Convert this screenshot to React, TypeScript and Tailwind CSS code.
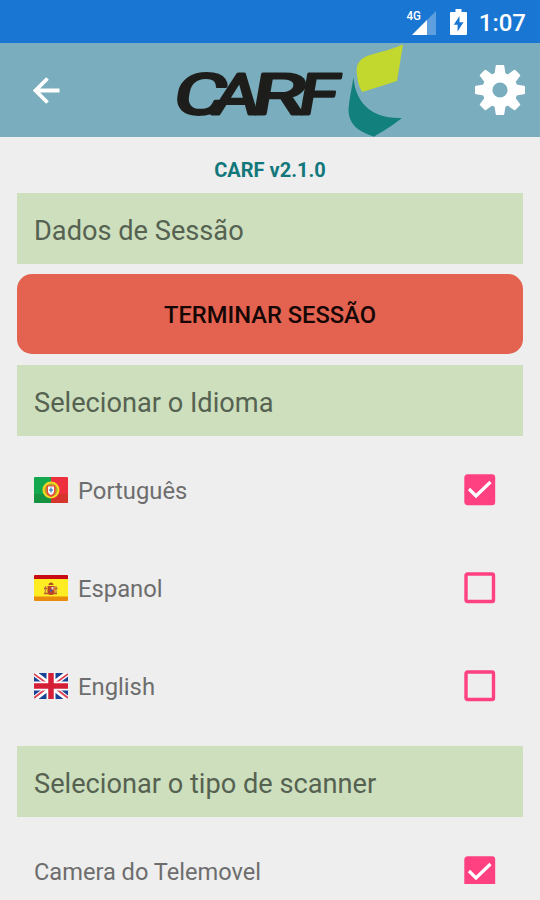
import React, { useState } from 'react';

type Language = 'pt' | 'es' | 'en';

const SignalIcon = () => (
	<svg className="w-[30px] h-7" viewBox="0 0 30 28">
		<path d="M30 3v24H6z" fill="#fff" fillOpacity="0.3" />
		<path d="M21 12v15H6z" fill="#fff" />
		<text x="0.500" y="12" fill="#fff" fontFamily="Roboto, sans-serif" fontWeight="500" fontSize="13" textLength="14.500" lengthAdjust="spacingAndGlyphs">
			4G
		</text>
	</svg>
);

const BatteryIcon = () => (
	<svg className="w-[17px] h-[26px]" viewBox="0 0 17 26">
		<path d="M5.5 0h6v3H16a1 1 0 0 1 1 1v21a1 1 0 0 1-1 1H1a1 1 0 0 1-1-1V4a1 1 0 0 1 1-1h4.5z" fill="#fff" />
		<path d="M9.500 7L3.800 15.800h3.800V22.500l5.900-9.300H9.500z" fill="#1976d2" />
	</svg>
);

const BackIcon = () => (
	<svg className="w-[27px] h-[27px]" viewBox="0 0 27 27" fill="none" stroke="#fff" strokeWidth="3.8">
		<path d="M26.500 13.500H3M14.500 1.500l-12 12 12 12" />
	</svg>
);

const GearIcon = () => (
	<svg className="w-[50px] h-[50px]" viewBox="-25 -25 50 50">
		<circle r="12.600" fill="none" stroke="#fff" strokeWidth="10" />
		{[0, 45, 90, 135, 180, 225, 270, 315].map((angle) => (
			<path
				key={angle}
				d="M-5.500-16L-4.300-24Q-4.200-25-3.300-25H3.300Q4.200-25 4.300-24L5.500-16z"
				fill="#fff"
				transform={`rotate(${angle})`}
			/>
		))}
	</svg>
);

const Logo = () => (
	<svg className="w-[250px] h-[94px]" viewBox="160 43 250 94">
		<g
			fill="#1d1d1b"
			stroke="#1d1d1b"
			strokeWidth="2.800"
			strokeLinejoin="round"
			fontFamily="Roboto, sans-serif"
			fontWeight="400"
			fontSize="56.500"
			transform="translate(0 113.500) skewX(-10)"
		>
			<text x="171.500" y="0" textLength="53" lengthAdjust="spacingAndGlyphs">C</text>
			<text x="211" y="0" textLength="46" lengthAdjust="spacingAndGlyphs">A</text>
			<text x="249" y="0" textLength="54" lengthAdjust="spacingAndGlyphs">R</text>
			<text x="296" y="0" textLength="40" lengthAdjust="spacingAndGlyphs">F</text>
		</g>
		<path d="M403 44.500L397 81L362.500 92C359 88 357 79 356.700 71C356.500 62 362 57.500 370 55C382 51.500 393 49 403 44.500z" fill="#c3d82e" />
		<path d="M353.500 77C355 101 370 119 402 118C392 126 383 131 374 136.700C357 131 349 124 348.500 110C349 99 352 88 353.500 77z" fill="#12807c" />
	</svg>
);

const PortugalFlag = () => (
	<svg className="w-[34px] h-[26px] rounded-[1px]" viewBox="0 0 34 26">
		<path d="M0 0h17v26H0z" fill="#14a84e" />
		<path d="M0 17h17v9H0z" fill="#159341" />
		<path d="M17 0h17v26H17z" fill="#ee2f3d" />
		<path d="M17 17h17v9H17z" fill="#d5352d" />
		<circle cx="17" cy="13" r="7.500" fill="#b4a82c" stroke="#f5d922" strokeWidth="2" />
		<path d="M12.500 8.500h9v6q0 3.500-4.500 5.500-4.500-2-4.500-5.500z" fill="#e94b39" />
		<path d="M14 9.500h6v5q0 2-3 3.500-3-1.500-3-3.500z" fill="#fff" />
		<path d="M17 10.500v5M15 13h4" stroke="#508bc9" strokeWidth="1.500" />
	</svg>
);

const SpainFlag = () => (
	<svg className="w-[34px] h-[26px] rounded-[1px]" viewBox="0 0 34 26">
		<path d="M0 0h34v26H0z" fill="#ffec22" />
		<path d="M0 0h34v4H0z" fill="#c90b13" />
		<path d="M0 21.500h34V26H0z" fill="#e98b0c" />
		<path d="M11.500 11v8M22 11v8" stroke="#c98b48" strokeWidth="1.500" />
		<path d="M10 13.500h3M20.500 13.500h3M10 18.500h13" stroke="#b95a35" strokeWidth="1.500" />
		<path d="M13.500 11h7v6q0 3-3.500 3-3.500 0-3.500-3z" fill="#bd4329" />
		<path d="M14.500 10q0-2.500 2.500-2.500t2.500 2.500z" fill="#ad5225" />
		<path d="M17.500 12h2v2.500h-2z" fill="#e7d9de" />
		<circle cx="17" cy="15.500" r="1.200" fill="#4c5a96" />
	</svg>
);

const EnglandFlag = () => (
	<svg className="w-[34px] h-[26px] rounded-[1px]" viewBox="0 0 34 26">
		<path d="M0 0h34v26H0z" fill="#174397" />
		<path d="M0 0l34 26M34 0L0 26" stroke="#fff" strokeWidth="5.500" />
		<path d="M0 1l15 11M34 1L19 12M0 25l13-10M34 25L21 15" stroke="#dc4250" strokeWidth="1.800" />
		<path d="M17 0v26M0 13h34" stroke="#fff" strokeWidth="9" />
		<path d="M17 0v26M0 13h34" stroke="#d51f36" strokeWidth="5.500" />
	</svg>
);

const languages: { id: Language; name: string; flag: React.ReactNode }[] = [
	{ id: 'pt', name: 'Português', flag: <PortugalFlag /> },
	{ id: 'es', name: 'Espanol', flag: <SpainFlag /> },
	{ id: 'en', name: 'English', flag: <EnglandFlag /> },
];

interface CheckboxProps {
	checked: boolean;
	label: string;
	onChange: () => void;
}

const Checkbox: React.FC<CheckboxProps> = ({ checked, label, onChange }) => (
	<button type="button" role="checkbox" aria-checked={checked} aria-label={label} onClick={onChange}>
		<svg className="block w-8 h-8" viewBox="0 0 32 32" fill="none">
			<rect x="2" y="2" width="27.500" height="27.500" rx="1.500" stroke="#ff4081" strokeWidth="3.400" fill={checked ? '#ff4081' : 'none'} />
			{checked && <path d="M5 15l7 7L26.500 8" stroke="#fff" strokeWidth="3.200" />}
		</svg>
	</button>
);

const SectionHeader = ({ title }: { title: string }) => (
	<h2 className="h-[71px] bg-[#cddfbd] pl-[17px] pt-[6px] flex items-center text-[27.200px] leading-none text-[#566251]">
		<span>{title}</span>
	</h2>
);

export default function App() {
	const [language, setLanguage] = useState<Language>('pt');
	const [camera, setCamera] = useState(true);

	return (
		<div className="w-[540px] h-[900px] overflow-hidden bg-[#eeeeee] font-['Roboto',sans-serif]">
			<div className="h-[43px] bg-[#1976d2] flex items-center justify-end pr-[14px] text-white">
				<SignalIcon />
				<div className="ml-[14px]">
					<BatteryIcon />
				</div>
				<span className="ml-[12px] pt-[2px] text-[24px] leading-none font-medium">1:07</span>
			</div>

			<header className="h-[94px] bg-[#7aadbd] flex items-center pl-[33px] pr-[15px]">
				<button type="button" aria-label="Voltar">
					<BackIcon />
				</button>
				<div className="ml-[100px] flex-1">
					<Logo />
				</div>
				<button type="button" aria-label="Definições">
					<GearIcon />
				</button>
			</header>

			<main className="px-[17px]">
				<p className="h-14 pt-[23px] text-center text-[20px] leading-5 font-bold text-[#12777b]">CARF v2.1.0</p>
				<SectionHeader title="Dados de Sessão" />
				<button type="button" className="mt-[10px] mb-[11px] pt-[3px] block w-full h-20 rounded-[15px] bg-[#e46250] text-[23.700px] font-medium text-[#160705]">
					TERMINAR SESSÃO
				</button>
				<SectionHeader title="Selecionar o Idioma" />

				<div className="pt-[5px] pb-[11px]">
					{languages.map((item) => (
						<div key={item.id} className="h-[98px] flex items-center pl-[17px] pr-[27px]">
							{item.flag}
							<span className="ml-[10px] pt-[3px] flex-1 text-[23.800px] text-[#6d6d6d]">{item.name}</span>
							<Checkbox checked={language === item.id} label={item.name} onChange={() => setLanguage(item.id)} />
						</div>
					))}
				</div>

				<SectionHeader title="Selecionar o tipo de scanner" />
				<div className="pt-[39px] flex items-start pl-[17px] pr-[27px]">
					<span className="flex-1 text-[23.600px] leading-8 text-[#6d6d6d]">Camera do Telemovel</span>
					<div className="h-7 overflow-hidden">
						<Checkbox checked={camera} label="Camera do Telemovel" onChange={() => setCamera(!camera)} />
					</div>
				</div>
			</main>
		</div>
	);
}
